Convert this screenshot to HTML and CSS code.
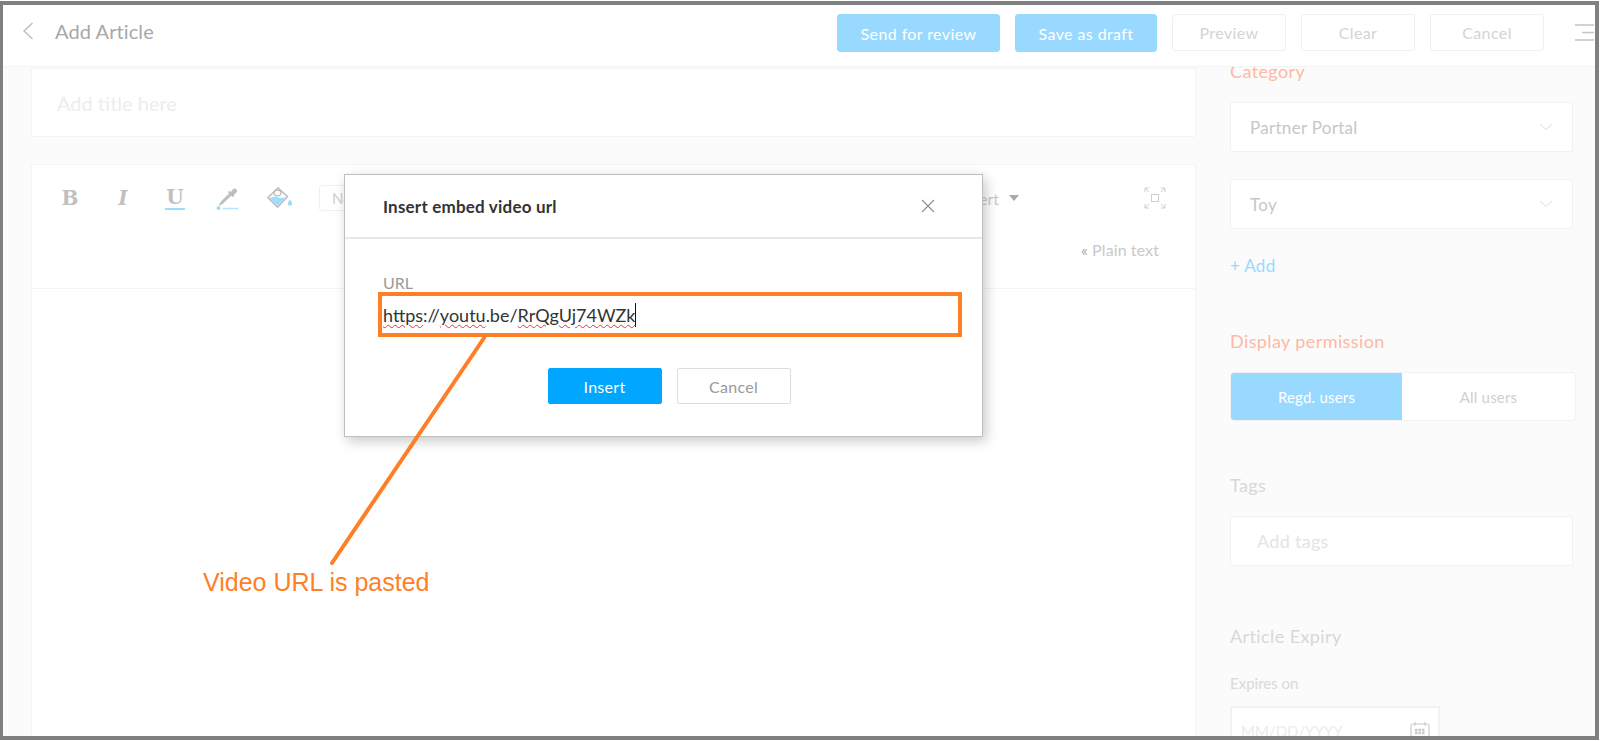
FILE: index.html
```html
<!DOCTYPE html>
<html lang="en">
<head>
<meta charset="utf-8">
<title>Add Article</title>
<link rel="stylesheet" href="styles.css">
</head>
<body>
<div class="frame">
  <header class="topbar">
    <svg class="back" width="12" height="18" viewBox="0 0 12 18"><path d="M10.5 1 2 9l8.500 8" fill="none" stroke="#bdbdbd" stroke-width="1.400"/></svg>
    <h1 class="page-title">Add Article</h1>
    <div class="actions">
      <button class="btn primary wide">Send for review</button>
      <button class="btn primary draft">Save as draft</button>
      <button class="btn ghost">Preview</button>
      <button class="btn ghost">Clear</button>
      <button class="btn ghost">Cancel</button>
    </div>
    <svg class="menu" width="20" height="18" viewBox="0 0 20 18"><path d="M0 1h19M7 8.500h12M0 16h19" stroke="#c4c4c4" stroke-width="1.300"/></svg>
  </header>
  <div class="main">
    <section class="content">
      <div class="card title-card">Add title here</div>
      <div class="card editor">
        <div class="toolbar">
          <div class="tool-row">
            <span class="tool bold">B</span>
            <span class="tool italic">I</span>
            <span class="tool under">U</span>
            <svg class="tool-svg" width="24" height="24" viewBox="0 0 24 24">
              <path d="M15 7.500 6.500 16l-2 3 3-1.800L16 9" fill="#9bdcff" stroke="#bdbdbd" stroke-width="1.300"/>
              <path d="m13.500 5.500 5 5M16 7l3-3.500a1.500 1.500 0 0 1 2 2L17.500 9" fill="#bdbdbd" stroke="#bdbdbd" stroke-width="1.800"/>
              <circle cx="3.500" cy="22" r="2" fill="#9bdcff"/>
              <path d="M8 22.500h15" stroke="#9bdcff" stroke-width="1.500" stroke-dasharray="2 .6"/>
            </svg>
            <svg class="tool-svg paint" width="26" height="22" viewBox="0 0 26 22">
              <path d="M1 10.500 11 1l9.500 8.500L10.500 20z" fill="#fff" stroke="#bdbdbd" stroke-width="1.600"/>
              <path d="M2.500 11 9 9.500c3 2 6 1.500 10 .5l-8.500 8.500z" fill="#9bdcff"/>
              <ellipse cx="10.500" cy="6" rx="3.500" ry="2.800" fill="none" stroke="#bdbdbd" stroke-width="1.300"/>
              <path d="M23 12.500c1.500 2 2.200 3 2.200 4a2.200 2.200 0 0 1-4.400 0c0-1 .7-2 2.200-4z" fill="#9bdcff"/>
            </svg>
            <span class="format-box">Normal</span>
            <span class="insert">Insert<i class="caret"></i></span>
            <svg class="expand" width="22" height="22" viewBox="0 0 22 22" fill="none" stroke="#cfcfcf" stroke-width="1">
              <rect x="7.500" y="7.500" width="7" height="7"/>
              <path d="M1 5V1h4M1 1l4 4M17 1h4v4M21 1l-4 4M1 17v4h4M1 21l4-4M21 17v4h-4M21 21l-4-4"/>
            </svg>
          </div>
          <div class="plain"><span class="chev">«</span> Plain text</div>
        </div>
      </div>
    </section>
    <aside class="side">
      <div class="label accent first">Category</div>
      <div class="field select top-21">Partner Portal<svg width="14" height="8" viewBox="0 0 14 8"><path d="m1 1 6 5.500L13 1" fill="none" stroke="#e8e8e8" stroke-width="1.200"/></svg></div>
      <div class="field select top-27">Toy<svg width="14" height="8" viewBox="0 0 14 8"><path d="m1 1 6 5.500L13 1" fill="none" stroke="#e8e8e8" stroke-width="1.200"/></svg></div>
      <div class="add">+ Add</div>
      <div class="label accent sect-55">Display permission</div>
      <div class="toggle">
        <span class="seg on">Regd. users</span>
        <span class="seg">All users</span>
      </div>
      <div class="label sect-54">Tags</div>
      <div class="field top-21 placeholder">Add tags</div>
      <div class="label sect-60">Article Expiry</div>
      <div class="small-label">Expires on</div>
      <div class="date-field">
        <span>MM/DD/YYYY</span>
        <svg width="20" height="20" viewBox="0 0 20 20" fill="none" stroke="#c9c9c9" stroke-width="1.100"><rect x="1" y="3" width="18" height="16" rx="2"/><path d="M5 1v4M15 1v4"/><path d="M5 9h10M5 12h10" stroke-width="2.500" stroke-dasharray="2.500 1"/></svg>
      </div>
    </aside>
  </div>

  <div class="modal">
    <div class="modal-head">
      <h2 class="modal-title">Insert embed video url</h2>
      <svg width="14" height="14" viewBox="0 0 14 14"><path d="m1 1 12 12M13 1 1 13" stroke="#8f8f8f" stroke-width="1.100"/></svg>
    </div>
    <div class="modal-body">
      <div class="url-label">URL</div>
      <div class="url-box"><span class="url-text"><u>https</u>://<u>youtu</u>.be/<u>RrQgUj74WZk</u></span></div>
      <div class="modal-actions">
        <button class="modal-btn insert-btn">Insert</button>
        <button class="modal-btn cancel-btn">Cancel</button>
      </div>
    </div>
  </div>

  <svg class="pointer" width="170" height="240" viewBox="0 0 170 240"><path d="M158 2 6 227" stroke="#ff7f27" stroke-width="4" stroke-linecap="round"/></svg>
  <div class="callout">Video URL is pasted</div>
</div>
</body>
</html>
```
FILE: styles.css
```css
* { box-sizing: border-box; }
html, body { margin: 0; padding: 0; background: #fff; }
body { font-family: Lato, "Open Sans", sans-serif; overflow: hidden; height: 741px; padding-top: 1px; }
button { font-family: inherit; cursor: default; }

.frame {
  position: relative;
  width: 1599px;
  height: 739px;
  border-style: solid;
  border-color: #808080;
  border-width: 4px 4px 4px 3px;
  background: #fbfbfb;
  overflow: hidden;
  display: flex;
  flex-direction: column;
}

.topbar {
  flex: none;
  height: 62px;
  background: #fff;
  border-bottom: 1px solid #f4f4f4;
  display: flex;
  align-items: center;
  position: relative;
  z-index: 2;
}
.back { margin-left: 19px; margin-top: -9px; flex: none; }
.page-title { margin: -9px 0 0 21px; font-size: 20px; font-weight: 400; color: #a8a8a8; letter-spacing: .1px; }
.actions { margin-left: auto; display: flex; gap: 15px; margin-top: -5px; }
.btn { height: 38px; width: 114px; border-radius: 3px; font-size: 16px; letter-spacing: .4px; padding: 0; }
.primary { background: #99d9ff; border: 1px solid #99d9ff; color: #fff; }
.wide { width: 163px; }
.draft { width: 142px; }
.ghost { background: #fff; border: 1px solid #f0f0f0; color: #d6d3d3; height: 37px; }
.menu { flex: none; margin: -5px 0 0 31px; }

.main { flex: 1; display: flex; min-height: 0; }
.content { width: 1193px; padding-left: 28px; display: flex; flex-direction: column; flex: none; }
.card { background: #fff; border: 1px solid #f4f4f4; border-radius: 2px; }
.title-card {
  height: 69px;
  margin-top: 1px;
  padding: 0 25px;
  display: flex;
  align-items: center;
  font-size: 20px;
  color: #ededed;
  flex: none;
}
.editor { margin-top: 27px; flex: 1; margin-bottom: -10px; }
.toolbar { height: 124px; border-bottom: 1px solid #f4f4f4; padding: 17px 28px 0 28px; position: relative; }
.tool-row { display: flex; align-items: center; height: 32px; }
.tool { width: 20px; font-family: "DejaVu Serif", serif; font-size: 20px; font-weight: 700; color: #c0c0c0; text-align: center; line-height: 26px; }
.bold { margin-left: 0; }
.italic { margin-left: 33px; font-style: italic; }
.under { margin-left: 32px; border-bottom: 2px solid #9bdcff; line-height: 22px; height: 24px; }
.tool-svg { margin-left: 30px; flex: none; }
.paint { margin-left: 28px; }
.format-box { margin-left: 26px; width: 120px; height: 26px; border: 1px solid #f0f0f0; border-radius: 3px; font-size: 15px; color: #d0d0d0; line-height: 24px; padding-left: 12px; flex: none; }
.insert { margin-left: auto; font-size: 16px; color: #c9c9c9; display: flex; align-items: center; }
.caret { margin: 0 0 0 10px; width: 0; height: 0; border: 5px solid transparent; border-top: 6px solid #a9a9a9; border-bottom: 0; }
.expand { margin-left: 125px; margin-right: 1px; flex: none; }
.plain { position: absolute; right: 36px; top: 75px; font-size: 16px; color: #c9c9c9; letter-spacing: .1px; }
.chev { color: #aaa; }

.side { margin-left: 34px; width: 345px; flex: none; display: flex; flex-direction: column; }
.label { font-size: 18px; line-height: 20px; color: #d9d7d7; letter-spacing: .4px; flex: none; }
.accent { color: #ffb8a3; }
.first { margin-top: -6px; position: relative; z-index: 1; }
.field { height: 50px; width: 343px; flex: none; background: #fff; border: 1px solid #f2f2f2; border-radius: 2px; display: flex; align-items: center; font-size: 17px; color: #c7c7c7; padding: 0 19px; letter-spacing: .3px; }
.select { justify-content: space-between; }
.top-21 { margin-top: 21px; }
.top-27 { margin-top: 27px; }
.placeholder { color: #e4e4e4; padding-left: 26px; font-size: 18px; }
.add { margin-top: 27px; font-size: 17px; line-height: 20px; color: #99d9ff; letter-spacing: .3px; flex: none; }
.sect-55 { margin-top: 55px; }
.sect-54 { margin-top: 54px; }
.sect-60 { margin-top: 60px; }
.toggle { margin-top: 21px; height: 49px; width: 346px; flex: none; display: flex; background: #fff; border: 1px solid #f2f2f2; border-radius: 4px; overflow: hidden; }
.seg { flex: 1; display: flex; align-items: center; justify-content: center; font-size: 15px; color: #d0d0d0; letter-spacing: .2px; }
.on { flex: none; width: 171px; background: #99d9ff; color: #fff; }
.small-label { margin-top: 27px; font-size: 15px; line-height: 20px; color: #d9d9d9; flex: none; }
.date-field { margin-top: 13px; height: 50px; width: 210px; flex: none; background: #fff; border: 2px solid #f2f2f2; display: flex; align-items: center; justify-content: space-between; padding: 0 8px 0 9px; font-size: 15px; color: #ececec; }

.modal {
  position: absolute;
  left: 341px;
  top: 169px;
  width: 639px;
  height: 263px;
  background: #fff;
  border: 1px solid #bfbfbf;
  box-shadow: 3px 4px 12px rgba(0,0,0,.22);
  z-index: 3;
  display: flex;
  flex-direction: column;
}
.modal-head { height: 64px; flex: none; display: flex; align-items: center; justify-content: space-between; padding: 0 47px 0 38px; border-bottom: 2px solid #e8e8e8; }
.modal-title { margin: 0; font-size: 17px; font-weight: 700; color: #333; letter-spacing: .2px; }
.modal-body { padding: 34px 20px 0 33px; }
.url-label { font-size: 16px; line-height: 19px; color: #9a9a9a; padding-left: 5px; }
.url-box { margin-top: 0; height: 45px; width: 584px; border: 4px solid #ff7f27; display: flex; align-items: center; padding-left: 1px; }
.url-text { font-size: 18px; line-height: 24px; color: #333; border-right: 1px solid #111; }
.url-text u { text-decoration: underline wavy #e3382e 1px; text-underline-offset: 2px; }
.modal-actions { margin-top: 31px; display: flex; justify-content: center; gap: 15px; padding-right: 2px; }
.modal-btn { width: 114px; height: 36px; border-radius: 2px; font-size: 16px; padding: 0; letter-spacing: .3px; }
.insert-btn { background: #00a6ff; border: 1px solid #00a6ff; color: #fff; }
.cancel-btn { background: #fff; border: 1px solid #ddd; color: #9a9a9a; }

.pointer { position: absolute; left: 323px; top: 331px; z-index: 4; }
.callout { position: absolute; left: 200px; top: 562px; z-index: 4; font-family: "Liberation Sans", Arial, sans-serif; font-size: 25px; line-height: 30px; color: #ff7f27; }
```
